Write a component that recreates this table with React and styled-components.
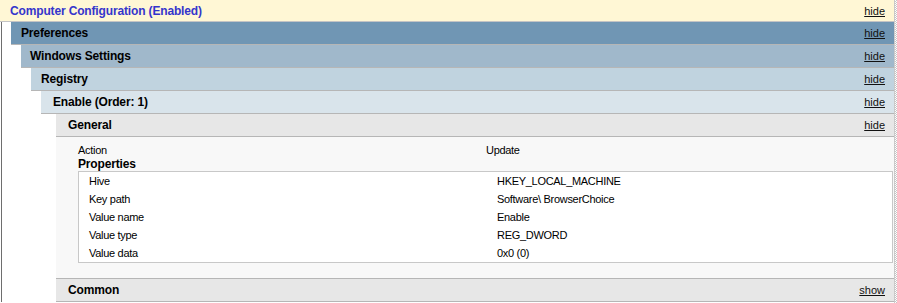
import React from "react";
import styled, { createGlobalStyle } from "styled-components";

const GlobalStyle = createGlobalStyle`
  html, body {
    margin: 0;
    padding: 0;
    background: #fff;
  }
  body {
    font-family: "Liberation Sans", Arial, sans-serif;
    font-size: 11px;
    letter-spacing: -0.3px;
    color: #000;
  }
`;

const levelColors = {
  1: "#7096B4",
  2: "#A0B8CB",
  3: "#C0D3DF",
  4: "#D9E4EB",
  5: "#E7E7E7",
};

const Page = styled.div`
  display: flex;
  height: 303px;
  overflow: hidden;
`;

const Main = styled.div`
  flex: 1;
  border-right: 1px solid #c9c9c9;
`;

const Edge = styled.div`
  width: 2px;
  background: repeating-conic-gradient(#c6c6c6 0 25%, #ffffff 0 50%) 0 0 / 2px 2px;
`;

const TopBar = styled.div`
  display: flex;
  align-items: center;
  justify-content: space-between;
  height: 21px;
  padding: 0 9px 0 10px;
  background: #fff7d5;
  border-bottom: 1px solid #c4c4c4;
`;

const Title = styled.span`
  font-weight: bold;
  font-size: 12px;
  letter-spacing: -0.15px;
  color: #3535cc;
`;

const Toggle = styled.a`
  font-size: 11px;
  letter-spacing: 0;
  color: #111;
  text-decoration: underline;
  cursor: pointer;
`;

const Tree = styled.div`
  margin-left: 1px;
  border-left: 1px solid #6e6e6e;
  padding-left: 9px;
`;

const Header = styled.div`
  display: flex;
  align-items: center;
  justify-content: space-between;
  height: 22px;
  padding: 0 9px 0 ${(p) => p.$pad}px;
  background: ${(p) => levelColors[p.$level]};
  border-bottom: 1px solid #b6b6b6;
`;

const HeaderTitle = styled.span`
  font-weight: bold;
  font-size: 12px;
  letter-spacing: -0.15px;
  color: #000;
`;

const Body = styled.div`
  padding-left: ${(p) => p.$indent}px;
`;

const Content = styled.div`
  background: #f8f8f8;
  padding: 6px 1px 15px 22px;
  border-bottom: 1px solid #b6b6b6;
`;

const FieldRow = styled.div`
  display: grid;
  grid-template-columns: 408px 1fr;
  align-items: center;
  height: ${(p) => p.$h}px;
  padding-left: ${(p) => p.$pad || 0}px;
`;

const Caption = styled.div`
  font-weight: bold;
  font-size: 12px;
  letter-spacing: -0.15px;
  line-height: 14px;
  height: 14px;
`;

const PropTable = styled.div`
  background: #fff;
  border: 1px solid #c8c8c8;
`;

const Section = ({ title, level, pad = 10, indent = 10, action = "hide", children }) => (
  <div>
    <Header $level={level} $pad={pad}>
      <HeaderTitle>{title}</HeaderTitle>
      <Toggle>{action}</Toggle>
    </Header>
    {children && <Body $indent={indent}>{children}</Body>}
  </div>
);

const properties = [
  ["Hive", "HKEY_LOCAL_MACHINE"],
  ["Key path", "Software\\ BrowserChoice"],
  ["Value name", "Enable"],
  ["Value type", "REG_DWORD"],
  ["Value data", "0x0 (0)"],
];

const App = () => (
  <Page>
    <GlobalStyle />
    <Main>
      <TopBar>
        <Title>Computer Configuration (Enabled)</Title>
        <Toggle>hide</Toggle>
      </TopBar>
      <Tree>
        <Section title="Preferences" level={1}>
          <Section title="Windows Settings" level={2} pad={9}>
            <Section title="Registry" level={3}>
              <Section title="Enable (Order: 1)" level={4} pad={12} indent={15}>
                <Section title="General" level={5} pad={12} />
                <Content>
                  <FieldRow $h={14}>
                    <span>Action</span>
                    <span>Update</span>
                  </FieldRow>
                  <Caption>Properties</Caption>
                  <PropTable>
                    {properties.map(([label, value]) => (
                      <FieldRow key={label} $h={18} $pad={10}>
                        <span>{label}</span>
                        <span>{value}</span>
                      </FieldRow>
                    ))}
                  </PropTable>
                </Content>
                <Section title="Common" level={5} pad={12} action="show" />
              </Section>
            </Section>
          </Section>
        </Section>
      </Tree>
    </Main>
    <Edge />
  </Page>
);

export default App;
